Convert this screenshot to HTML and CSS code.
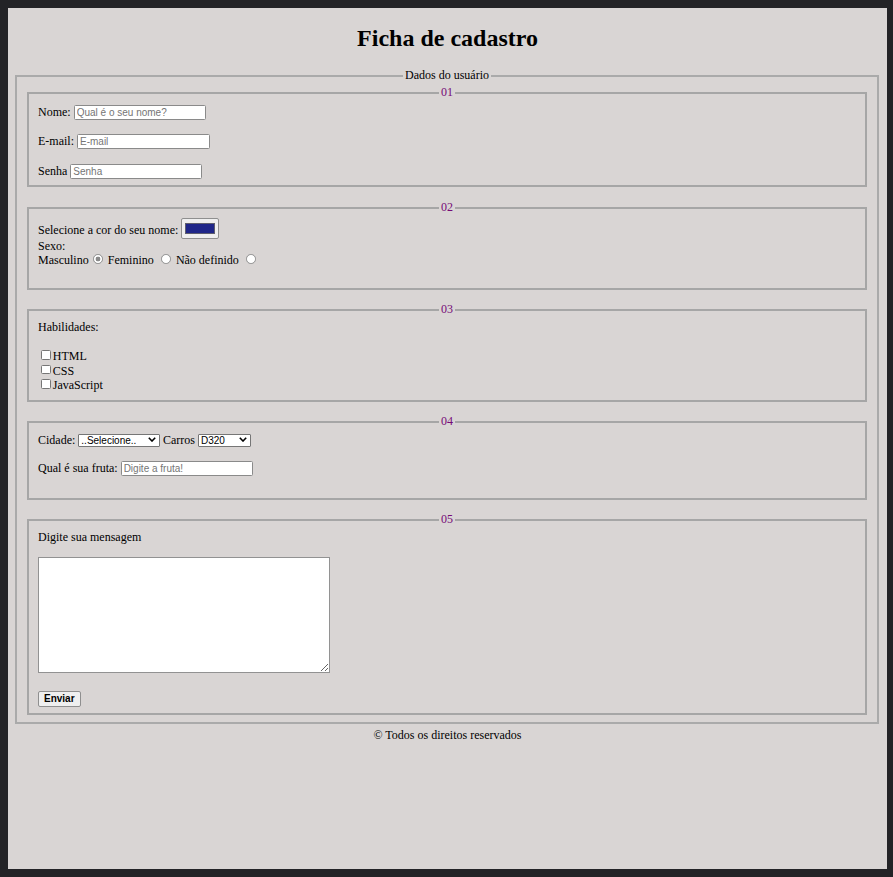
FILE: index.html
```html
<!DOCTYPE html>
<html lang="pt-BR">
<head>
<meta charset="utf-8">
<title>Ficha de cadastro</title>
<link rel="stylesheet" href="styles.css">
</head>
<body>
<h1 class="title">Ficha de cadastro</h1>
<form class="form">
  <fieldset class="outer">
    <legend class="legend">Dados do usuário</legend>

    <fieldset class="group g1">
      <legend class="legend num">01</legend>
      <div class="row"><label for="nome">Nome:</label> <input class="field" type="text" id="nome" placeholder="Qual é o seu nome?"></div>
      <div class="row gap"><label for="email">E-mail:</label> <input class="field w-email" type="email" id="email" placeholder="E-mail"></div>
      <div class="row gap"><label for="senha">Senha</label> <input class="field" type="password" id="senha" placeholder="Senha"></div>
    </fieldset>

    <fieldset class="group g2">
      <legend class="legend num">02</legend>
      <div class="color-row"><label class="color-label" for="cor">Selecione a cor do seu nome:</label><input class="color" type="color" id="cor" value="#1f2689"></div>
      <div class="line">Sexo:</div>
      <div class="line last">Masculino<input class="radio" type="radio" name="sexo" checked> Feminino <input class="radio" type="radio" name="sexo"> Não definido <input class="radio" type="radio" name="sexo"></div>
    </fieldset>

    <fieldset class="group g3">
      <legend class="legend num">03</legend>
      <div class="line habil">Habilidades:</div>
      <div class="check-line"><input class="check" type="checkbox" id="html"><label for="html">HTML</label></div>
      <div class="check-line"><input class="check" type="checkbox" id="css"><label for="css">CSS</label></div>
      <div class="check-line"><input class="check" type="checkbox" id="js"><label for="js">JavaScript</label></div>
    </fieldset>

    <fieldset class="group g4">
      <legend class="legend num">04</legend>
      <div class="row-sel"><label for="cidade">Cidade:</label> <span class="select-wrap"><select class="select w-cidade" id="cidade"><option>..Selecione..</option><option>São Paulo</option><option>Rio de Janeiro</option></select><svg class="chev" width="8" height="5" viewBox="0 0 8 5"><polyline points="0.8,0.8 4,4 7.2,0.8" fill="none" stroke="#000" stroke-width="1.6"/></svg></span> Carros <span class="select-wrap"><select class="select w-carros" id="carros"><option>D320</option><option>A200</option></select><svg class="chev" width="8" height="5" viewBox="0 0 8 5"><polyline points="0.8,0.8 4,4 7.2,0.8" fill="none" stroke="#000" stroke-width="1.6"/></svg></span></div>
      <div class="row fruta"><label for="fruta">Qual é sua fruta:</label> <input class="field" type="text" id="fruta" placeholder="Digite a fruta!"></div>
    </fieldset>

    <fieldset class="group g5">
      <legend class="legend num">05</legend>
      <div class="line"><label for="msg">Digite sua mensagem</label></div>
      <textarea class="message" id="msg"></textarea>
      <button class="send" type="submit">Enviar</button>
    </fieldset>
  </fieldset>
</form>
<footer class="footer">© Todos os direitos reservados</footer>
</body>
</html>
```

FILE: styles.css
```css
html {
  background: #232326;
}

body {
  margin: 8px 6px 8px 8px;
  min-height: calc(100vh - 16px);
  background: #d9d5d4;
  font: 12px/14px "Liberation Serif", "Times New Roman", serif;
  color: #000;
  display: flow-root;
}

.title {
  font-size: 24px;
  line-height: 28px;
  font-weight: bold;
  text-align: center;
  margin: 16px 0;
}

.form {
  margin: 0;
}

.outer {
  margin: 0 8px 0 7px;
  padding: 2px 10px 6.5px;
  border: 2px solid #aaaaaa;
  min-width: 0;
}

.legend {
  line-height: 15px;
  padding: 0 2px;
  margin: 0 auto;
}

.num {
  color: #760a76;
}

.group {
  margin: 12.8px 0 0;
  padding: 3px 9px 7px;
  border: 2px solid #a6a6a6;
  min-width: 0;
}

.g1 {
  margin-top: 0;
  padding-top: 5px;
  padding-bottom: 6.5px;
}

.g2 {
  padding-top: 3.3px;
}

.g3 {
  padding-top: 3px;
  padding-bottom: 6.5px;
}

.g4 {
  padding-top: 3.6px;
}

.g5 {
  padding-top: 2.5px;
  padding-bottom: 6.6px;
}

.row {
  height: 15px;
  line-height: 14px;
  white-space: nowrap;
}

.row.gap {
  margin-top: 14.4px;
}

.field {
  box-sizing: border-box;
  width: 132px;
  height: 15px;
  margin: 0;
  padding: 0 2px;
  border: 1px solid #8a8a8a;
  border-radius: 1.5px;
  background: #fff;
  font: 10px "Liberation Sans", Arial, sans-serif;
  color: #000;
  vertical-align: baseline;
}

.w-email {
  width: 132.7px;
}

.field::placeholder {
  color: #757575;
}

.color-row {
  display: flex;
  align-items: flex-start;
  gap: 3px;
  height: 20.7px;
}

.color-label {
  margin-top: 4.95px;
  line-height: 14px;
}

.color {
  -webkit-appearance: none;
  appearance: none;
  box-sizing: border-box;
  width: 37.5px;
  height: 20.7px;
  margin: 0;
  padding: 0;
  border: 1px solid #8f8f8f;
  border-radius: 2px;
  background: #efefef;
}

.color::-webkit-color-swatch-wrapper {
  padding: 3.6px 2.6px;
}

.color::-webkit-color-swatch {
  border: 1px solid #5e5e6e;
  border-radius: 0;
}

.line {
  line-height: 14px;
  white-space: nowrap;
}

.line.last {
  margin-bottom: 13.6px;
}

.radio {
  -webkit-appearance: none;
  appearance: none;
  box-sizing: border-box;
  width: 9.6px;
  height: 9.6px;
  margin: 0 2px 0 4.5px;
  border: 1px solid #8d8d8d;
  border-radius: 50%;
  background: #fff;
  vertical-align: baseline;
}

.radio:checked {
  border-color: #8d8d8d;
  background: radial-gradient(circle, #8a8a8a 0, #8a8a8a 2.1px, #fff 2.7px);
}

.habil {
  margin-bottom: 14.6px;
}

.check-line {
  line-height: 14.65px;
  white-space: nowrap;
}

.check {
  -webkit-appearance: none;
  appearance: none;
  box-sizing: border-box;
  width: 9.5px;
  height: 9.5px;
  margin: 0 2px 0 3.3px;
  border: 1px solid #767676;
  border-radius: 1.5px;
  background: #fff;
  vertical-align: 0.5px;
}

.row-sel {
  line-height: 14px;
  white-space: nowrap;
}

.select-wrap {
  position: relative;
  display: inline-block;
}

.select {
  -webkit-appearance: none;
  appearance: none;
  box-sizing: border-box;
  height: 13px;
  margin: 0;
  padding: 0 10px 0 2px;
  border: 1px solid #767676;
  border-radius: 1px;
  background: #fff;
  font: 10px/11px "Liberation Sans", Arial, sans-serif;
  color: #000;
}

.w-cidade {
  width: 81.7px;
}

.w-carros {
  width: 52.7px;
}

.chev {
  position: absolute;
  right: 3.6px;
  top: 4.2px;
  pointer-events: none;
}

.fruta {
  margin-top: 13.6px;
  margin-bottom: 15px;
}

.message {
  display: block;
  box-sizing: border-box;
  width: 292.3px;
  height: 116px;
  margin: 13.35px 0 0;
  padding: 2px;
  border: 1px solid #929292;
  border-radius: 0;
  background: #fff;
  font: 10px "Liberation Mono", monospace;
}

.send {
  display: block;
  box-sizing: border-box;
  height: 16px;
  margin: 17.4px 0 0;
  padding: 0 5px;
  border: 1px solid #8f8f8f;
  border-radius: 2px;
  background: #efefef;
  font: bold 10px/12px "Liberation Sans", Arial, sans-serif;
  color: #000;
}

.footer {
  margin-top: 4.45px;
  line-height: 14px;
  text-align: center;
}
```
